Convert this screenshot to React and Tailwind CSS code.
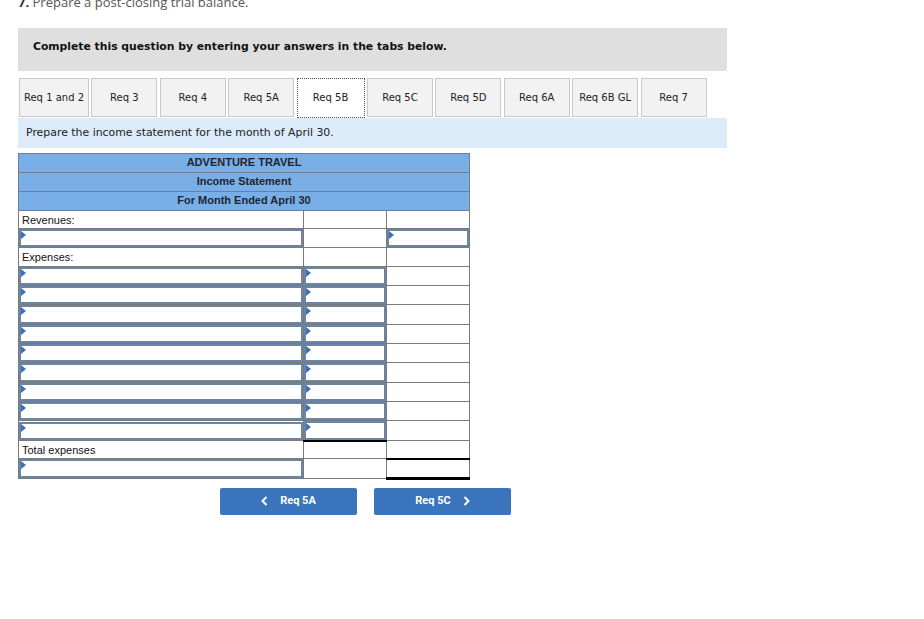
import React from 'react';

const tabs = ['Req 1 and 2', 'Req 3', 'Req 4', 'Req 5A', 'Req 5B', 'Req 5C', 'Req 5D', 'Req 6A', 'Req 6B GL', 'Req 7'];

function Marker() {
  return (
    <span className="absolute left-0 top-0 h-0 w-0 border-y-[4px] border-l-[5px] border-y-transparent border-l-[#3f6fb0]" />
  );
}

function InputCell({ className = '' }) {
  return (
    <td className={`relative h-[18.35px] border border-[#7a7a7a] p-0 ${className}`}>
      <div className="relative h-[18.35px] border-2 border-[#6b84a4] bg-white">
        <Marker />
      </div>
    </td>
  );
}

function LabelCell({ children }) {
  return (
    <td className="h-[18.35px] border border-[#7a7a7a] px-[3px] pt-[1px] pb-0 text-[11px] leading-[16px] text-[#111]">{children}</td>
  );
}

function EmptyCell({ className = '' }) {
  return <td className={`h-[18.35px] border border-[#7a7a7a] p-0 ${className}`} />;
}

export default function App() {
  const expenseRows = Array.from({ length: 9 });

  return (
    <div className="h-[619px] w-[924px] overflow-hidden bg-white font-['DejaVu_Sans',sans-serif]">
      <p className="-mt-[7px] ml-[18px] font-['Open_Sans',sans-serif] text-[13px] text-[#555]">
        <b className="text-[#333]">7.</b> Prepare a post-closing trial balance.
      </p>

      <div className="ml-[18px] mt-[15px] flex h-[43px] w-[709px] items-center bg-[#dfdfdf] pb-[3px] pl-[15px]">
        <span className="text-[10.8px] font-bold text-[#111]">
          Complete this question by entering your answers in the tabs below.
        </span>
      </div>

      <div className="ml-[19px] mt-[7px] flex h-[40px] gap-[2.4px]">
        {tabs.map((tab, i) => (
          <div
            key={tab}
            className={
              i === 4
                ? 'flex h-[40px] w-[68px] items-center justify-center border border-dotted border-[#555] bg-white text-[10px] text-[#222]'
                : `flex h-[39px] ${i === 0 ? 'w-[70px]' : 'w-[66px]'} items-center justify-center border border-[#c9c9c9] bg-[#f2f2f2] text-[10px] text-[#222]`
            }
          >
            {tab}
          </div>
        ))}
      </div>

      <div className="ml-[18px] flex h-[30px] w-[709px] items-center bg-[#dcebf9] pl-[8px] pt-[2px]">
        <span className="text-[10.9px] text-[#222]">Prepare the income statement for the month of April 30.</span>
      </div>

      <table className="ml-[18px] mt-[5px] w-[451px] table-fixed border-collapse border border-[#6b7f99] font-['Liberation_Sans',sans-serif]">
        <colgroup>
          <col className="w-[285px]" />
          <col className="w-[83px]" />
          <col className="w-[83px]" />
        </colgroup>
        <tbody>
          {['ADVENTURE TRAVEL', 'Income Statement', 'For Month Ended April 30'].map((t) => (
            <tr key={t}>
              <td colSpan={3} className="h-[19px] border border-[#6b7f99] bg-[#7aaee6] p-0 text-center text-[11px] font-bold text-[#1c2633]">
                {t}
              </td>
            </tr>
          ))}
          <tr>
            <LabelCell>Revenues:</LabelCell>
            <EmptyCell />
            <EmptyCell />
          </tr>
          <tr>
            <InputCell />
            <EmptyCell />
            <InputCell />
          </tr>
          <tr>
            <LabelCell>Expenses:</LabelCell>
            <EmptyCell />
            <EmptyCell />
          </tr>
          {expenseRows.map((_, i) => (
            <tr key={i}>
              <InputCell />
              <InputCell />
              <EmptyCell />
            </tr>
          ))}
          <tr>
            <LabelCell>Total expenses</LabelCell>
            <EmptyCell className="border-t-2 border-t-black" />
            <EmptyCell />
          </tr>
          <tr>
            <InputCell />
            <EmptyCell />
            <EmptyCell className="border-t-2 border-t-black border-b-[3px] border-b-black" />
          </tr>
        </tbody>
      </table>

      <div className="ml-[220px] mt-[8px] flex gap-[17px] font-['Roboto',sans-serif]">
        <button className="flex h-[27px] w-[137px] items-center justify-center gap-[12px] rounded-[2px] bg-[#3a74bc] text-[11px] font-bold text-white">
          <svg width="7" height="10" viewBox="0 0 7 10">
            <path d="M5.5 1 L1.5 5 L5.5 9" fill="none" stroke="white" strokeWidth="2" />
          </svg>
          Req 5A
        </button>
        <button className="flex h-[27px] w-[137px] items-center justify-center gap-[12px] rounded-[2px] bg-[#3a74bc] text-[11px] font-bold text-white">
          Req 5C
          <svg width="7" height="10" viewBox="0 0 7 10">
            <path d="M1.5 1 L5.5 5 L1.5 9" fill="none" stroke="white" strokeWidth="2" />
          </svg>
        </button>
      </div>
    </div>
  );
}
